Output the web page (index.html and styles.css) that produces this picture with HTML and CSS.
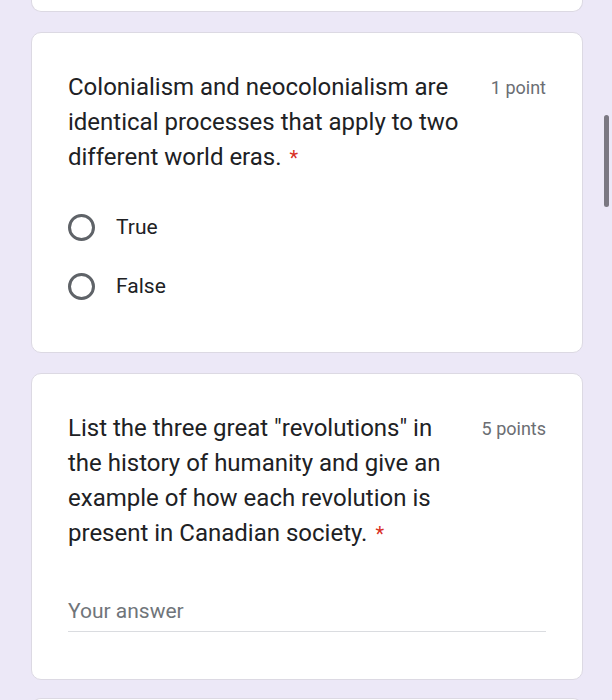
FILE: index.html
```html
<!DOCTYPE html>
<html>
<head>
<meta charset="utf-8">
<link rel="stylesheet" href="styles.css">
</head>
<body>
<div class="page">
  <div class="card card-cut"></div>

  <div class="card q-card q-radio">
    <div class="q-head">
      <div class="q-title"><span class="q-text-run">Colonialism and neocolonialism are identical processes that apply to two different world eras.</span> <span class="req">*</span></div>
      <div class="q-points">1 point</div>
    </div>
    <div class="options">
      <label class="option"><span class="radio"></span><span class="opt-text">True</span></label>
      <label class="option"><span class="radio"></span><span class="opt-text">False</span></label>
    </div>
  </div>

  <div class="card q-card q-text">
    <div class="q-head">
      <div class="q-title"><span class="q-text-run">List the three great "revolutions" in the history of humanity and give an example of how each revolution is present in Canadian society.</span> <span class="req">*</span></div>
      <div class="q-points">5 points</div>
    </div>
    <div class="answer">Your answer</div>
  </div>

  <div class="card card-next"></div>
</div>
<div class="scrollbar"></div>
</body>
</html>
```

FILE: styles.css
```css
html, body {
  margin: 0;
  padding: 0;
}
body {
  background: #ece8f7;
  font-family: Roboto, "Noto Sans", Arial, sans-serif;
  color: #202124;
  width: 612px;
  height: 700px;
  overflow: hidden;
  position: relative;
}
.page {
  display: flex;
  flex-direction: column;
  gap: 20px;
  padding-left: 31px;
  width: 552px;
}
.card {
  background: #ffffff;
  border: 1px solid #dcd9e3;
  border-radius: 10px;
  box-sizing: border-box;
}
.card-cut {
  height: 12px;
  border-top: none;
  border-radius: 0 0 10px 10px;
}
.card-next {
  height: 20px;
  border-bottom: none;
  border-radius: 10px 10px 0 0;
  margin-top: -2px;
}
.q-card {
  padding: 37px 36px 0 36px;
}
.q-radio {
  height: 321px;
}
.q-text {
  height: 307px;
}
.q-head {
  display: flex;
  justify-content: space-between;
  align-items: flex-start;
}
.q-title {
  width: 395px;
  flex: none;
  font-size: 24px;
  line-height: 35px;
  color: #202124;
}
.req {
  color: #d93025;
  font-size: 20px;
  line-height: 20px;
  margin-left: 2px;
}
.q-points {
  font-size: 18px;
  color: #6b6e73;
  line-height: 35px;
  white-space: nowrap;
}
.options {
  display: flex;
  flex-direction: column;
  gap: 33px;
  margin-top: 39px;
}
.option {
  display: flex;
  align-items: center;
  gap: 21px;
  height: 26px;
}
.radio {
  width: 27px;
  height: 27px;
  border: 3px solid #5f6368;
  border-radius: 50%;
  box-sizing: border-box;
  flex: none;
}
.opt-text {
  font-size: 21px;
  color: #202124;
}
.answer {
  margin-top: 48px;
  font-size: 21px;
  color: #70757a;
  padding-bottom: 8px;
  border-bottom: 1px solid #dadce0;
  width: 478px;
}
.scrollbar {
  position: absolute;
  left: 604px;
  top: 115px;
  width: 5px;
  height: 92px;
  border-radius: 3px;
  background: #7b7882;
}
```
